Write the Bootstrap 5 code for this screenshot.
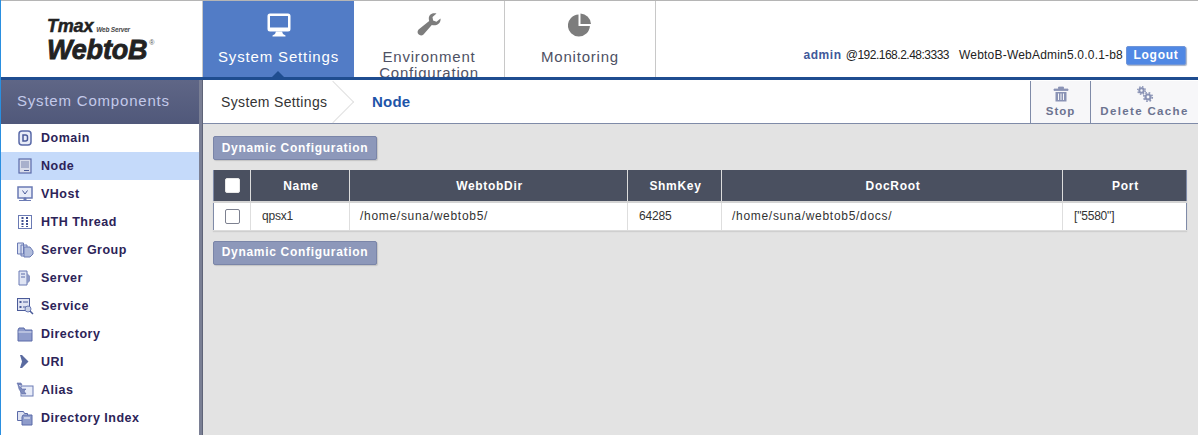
<!DOCTYPE html>
<html lang="en"><head><meta charset="utf-8"><title>WebtoB</title>
<link href="https://cdn.jsdelivr.net/npm/bootstrap@5.3.0/dist/css/bootstrap.min.css" rel="stylesheet">
<style>
html,body{height:435px;overflow:hidden;background:#e3e3e3;font-family:"Liberation Sans",Arial,sans-serif;font-size:12px;color:#222}
.shell{height:435px;width:1198px;border-left:1px solid #2a8fe0}
.topbar{height:80px;border-top:1px solid #b5b5b5;border-bottom:3px solid #1f4d90;background:#fff}
.logo-box{width:201px;height:76px;flex:none;padding:16px 0 0 46px;font-style:italic;font-weight:700;color:#222;line-height:1}
.logo-a{font-size:18px;letter-spacing:-.2px;height:20px;display:flex;align-items:baseline;gap:3px;-webkit-text-stroke:.5px #222}
.logo-a small{font-size:6.500px;font-weight:700;color:#444;-webkit-text-stroke:0}
.logo-b{font-size:27px;letter-spacing:-.2px;display:flex;-webkit-text-stroke:.8px #222}
.logo-b sup{font-size:7px;font-style:normal;font-weight:400;position:static;line-height:12px;margin-left:2px;-webkit-text-stroke:0;color:#555}
.tab-item{width:151px;height:76px;flex:none;border-right:1px solid #c8c8c8;text-align:center;font-size:15px;line-height:16px;color:#4e5164;letter-spacing:.8px;overflow:hidden;padding-top:12px;position:relative}
.tab-item svg{display:block;margin:0 auto 12px}
.tab-on{background:#527cc6;color:#fff;border-right:0;border-left:1px solid #c8c8c8;overflow:visible;letter-spacing:.85px}
.tab-on::after{content:"";position:absolute;left:69px;bottom:0;border:6px solid transparent;border-top:0;border-bottom-color:#1f4d90}
.tab-first{width:152px}
.user-box{flex:1;display:flex;justify-content:flex-end;align-items:center;height:76px;padding:32px 12px 0 0;gap:0;white-space:nowrap;font-size:12px;letter-spacing:.2px;color:#222}
.user-name{color:#40589a;font-weight:700;letter-spacing:.6px;margin-right:4px}
.user-ip{letter-spacing:-.5px;margin-right:10px}
.logout{background:#5088e4;color:#fff;font-weight:700;font-size:12px;letter-spacing:.7px;border:1px solid #6f95d8;border-radius:2px;padding:0;width:60px;height:19px;line-height:16px;margin-left:3px;box-shadow:1px 1px 1px #a9b3c6}
.side{width:198px;flex:none;background:#fff;height:355px;overflow:hidden}
.side-head{height:44px;background:linear-gradient(#5f6686,#50587a);color:#c3c9ea;font-size:15px;letter-spacing:.8px;line-height:42px;padding-left:16px}
.side-row{height:28px;display:flex;align-items:center;font-weight:700;font-size:12.5px;letter-spacing:.5px;color:#2c2358;padding-left:15px}
.side-row svg{width:18px;height:18px;flex:none;margin-right:7px}
.side-on{background:#c5dafa}
.split{width:4px;flex:none;background:#7a7f94;border-right:1px solid #5f6478;margin-right:0}
.main{flex:1;min-width:0;height:355px}
.crumb{height:44px;background:#fff;border-top:1px solid #fff;border-bottom:1px solid #7f8ba8}
.crumb-a{font-size:14px;letter-spacing:.35px;color:#333;padding-left:18px;width:136px;line-height:42px;position:relative}
.crumb-a::after{content:"";position:absolute;right:-9px;top:0;width:30px;height:30px;transform:translateY(6px) rotate(45deg);border-top:1px solid #e0e0e0;border-right:1px solid #e0e0e0}
.crumb-b{font-size:15px;font-weight:700;color:#1d54a8;padding-left:33px;line-height:42px;letter-spacing:.2px}
.tool{border-left:1px solid #7f8ba8;background:#f7f7f9;height:42px;text-align:center;color:#6c7390;font-weight:700;font-size:11.5px;letter-spacing:1px;line-height:12px;padding-top:5px}
.tool svg{display:block;margin:0 auto 3px}
.tool-a{width:60px}.tool-b{width:108px;letter-spacing:1.35px}
.pane{padding:12px 11px 0 10px}
.act{display:block;background:#8d98ba;border:1px solid #7a85a8;border-radius:2px;color:#fff;font-weight:700;font-size:12px;letter-spacing:.7px;width:164px;height:24px;line-height:21px;padding:0;box-shadow:1px 1px 1px #c4c4c4;white-space:nowrap}
table.grid{table-layout:fixed;width:973px;margin:10px 0 10px;border-collapse:collapse;background:#fff;box-shadow:0 1px 1px #cfcfcf}
table.grid th{background:#4a5060;color:#fff;height:32px;font-size:12px;letter-spacing:.7px;text-align:center;border:0;border-right:1px solid #dcdcdc;border-bottom:2px solid #d4d4d4;padding:0 0 0 2px;vertical-align:middle}
table.grid td{height:28px;padding:0 10px;font-size:12px;letter-spacing:.7px;color:#333;border-right:1px solid #dedede;border-bottom:1px solid #dcdcdc;vertical-align:middle;white-space:nowrap}
table.grid td.cell-tight{letter-spacing:-.2px;padding-left:11px}
table.grid th:last-child,table.grid td:last-child{border-right:1px solid #7f8ba8}
table.grid th:first-child,table.grid td:first-child{padding:0;text-align:center;border-left:1px solid #7f8ba8}
.box{display:block;width:15px;height:15px;border:1px solid #7d8190;border-radius:2px;background:#fff;margin:0 auto}
.box-h{border-color:#e8e8e8}
</style></head><body>
<div class="shell d-flex flex-column">
 <div class="topbar d-flex">
  <div class="logo-box"><div class="logo-a">Tmax <small>Web Server</small></div><div class="logo-b">WebtoB<sup>®</sup></div></div>
  <div class="tab-item tab-on tab-first">
   <svg width="24" height="24" viewBox="0 0 24 24"><path d="M3 0.500h18a2.500 2.500 0 0 1 2.500 2.500v13a2.500 2.500 0 0 1-2.500 2.500H3A2.500 2.500 0 0 1 .5 16V3A2.500 2.500 0 0 1 3 .5zM3 3v11.500h18V3z" fill="#fff" fill-rule="evenodd"/><path d="M9 18.500h6l1 2.500 2.500 1.500v1H5.500v-1L8 21z" fill="#fff"/></svg>
   System Settings</div>
  <div class="tab-item">
   <svg width="24" height="24" viewBox="0 0 24 24"><path d="M23.500 5.500l-4 3.200-3.400-1.200-.6-3.500L19.500.6c-3.500-1.200-7.700.8-7.700 4.800 0 1 .2 1.800.4 2.600L1.600 16.400c-1.300 1.300-1.400 3.400-.1 4.900 1.300 1.400 3.600 1.500 5 .1l8.300-9.500c3.900 1.300 9.400-.8 8.700-6.400z" fill="#7d7d7d"/></svg>
   Environment Configuration</div>
  <div class="tab-item">
   <svg width="24" height="24" viewBox="0 0 24 24"><path d="M10.500 1.500v11.500h11.400A11 11 0 1 1 10.500 1.500z" fill="#7d7d7d"/><path d="M12.500 0.500A11 11 0 0 1 23 11h-10.500z" fill="#7d7d7d"/></svg>
   Monitoring</div>
  <div class="user-box"><span class="user-name">admin</span><span class="user-ip">@192.168.2.48:3333</span><span>WebtoB-WebAdmin5.0.0.1-b8</span><button class="logout">Logout</button></div>
 </div>
 <div class="d-flex flex-grow-1">
  <div class="side">
   <div class="side-head">System Components</div>
   <div class="side-row"><svg viewBox="0 0 18 18"><rect x="3" y="2" width="12" height="14" rx="3" fill="#e8ecf8" stroke="#5a6aa8" stroke-width="1.500"/><path d="M7 6h2.500a2 2 0 0 1 2 2v2a2 2 0 0 1-2 2H7z" fill="none" stroke="#4a5a98" stroke-width="1.500"/></svg>Domain</div>
   <div class="side-row side-on"><svg viewBox="0 0 18 18"><rect x="3" y="2" width="12" height="14" fill="#d8dcea" stroke="#5a6aa8" stroke-width="1.200"/><rect x="5" y="4" width="8" height="7" fill="#a8b0cc"/><path d="M8 13.500h5" stroke="#4a5a98"/></svg>Node</div>
   <div class="side-row"><svg viewBox="0 0 18 18"><rect x="2" y="2" width="14" height="11" fill="#e8ecf8" stroke="#6a7ab4" stroke-width="1.500"/><path d="M6.500 5.500L9 9l2.500-3.500" fill="none" stroke="#4a5a98"/><path d="M8 13h2v2H8zM3 15.500h12" stroke="#6a7ab4" fill="#6a7ab4"/></svg>VHost</div>
   <div class="side-row"><svg viewBox="0 0 18 18"><rect x="2.500" y="2.500" width="13" height="13" fill="#fff" stroke="#6a7ab4"/><path d="M6.500 4v10M11 4v10" stroke="#3f4f90" stroke-width="2" stroke-dasharray="2 1"/></svg>HTH Thread</div>
   <div class="side-row"><svg viewBox="0 0 18 18"><path d="M1.500 2h6v11h-6zM5 4h6v11H5z" fill="#d8dff2" stroke="#6a7ab4"/><path d="M8 6h6l3 4v3l-3 3H8z" fill="#b0bcdc" stroke="#6a7ab4"/></svg>Server Group</div>
   <div class="side-row"><svg viewBox="0 0 18 18"><path d="M3 2h7l1 0v14H3z" fill="#e0e5f4" stroke="#6a7ab4"/><path d="M11 4l3 3v5l-3 3z" fill="#8c98c4"/><path d="M5 5h4M5 8h4" stroke="#5a6aa8"/></svg>Server</div>
   <div class="side-row"><svg viewBox="0 0 18 18"><rect x="1.500" y="1.500" width="12" height="12" fill="#dfe3f2" stroke="#4a5a98"/><path d="M3.500 4h2v2h-2zM3.500 9h2v2h-2z" fill="#4a5a98"/><path d="M7 5h5M7 10h3" stroke="#4a5a98"/><circle cx="12" cy="12" r="3" fill="#c8d0e6" stroke="#6a7ab4"/><path d="M14 14l3 3" stroke="#4a5a98" stroke-width="1.500"/></svg>Service</div>
   <div class="side-row"><svg viewBox="0 0 18 18"><path d="M2 5l1-2h5l1 2h7v11H2z" fill="#8f9ccb" stroke="#5a6aa8"/><path d="M2.500 7h13" stroke="#dfe3f2"/></svg>Directory</div>
   <div class="side-row"><svg viewBox="0 0 18 18"><path d="M4 2h2l6.500 6.500L6 15H4l2-6.500z" fill="#5a6aa0"/></svg>URI</div>
   <div class="side-row"><svg viewBox="0 0 18 18"><rect x="5" y="5" width="12" height="10" fill="#e8ecf8" stroke="#6a7ab4"/><path d="M1 2h4l1 2H2zM2 4l4 4 4 0-2 2 2 3H6L3 8z" fill="#7f8cbc" stroke="#5a6aa8" stroke-width=".6"/></svg>Alias</div>
   <div class="side-row"><svg viewBox="0 0 18 18"><path d="M1.500 2.500h6l1 2h3v7h-10z" fill="#dfe3f2" stroke="#5a6aa8"/><path d="M6 8l1-2h9v10H6z" fill="#8f9ccb" stroke="#5a6aa8"/><path d="M8 9h6" stroke="#fff"/></svg>Directory Index</div>
  </div>
  <div class="split"></div>
  <div class="main">
   <div class="crumb d-flex">
    <div class="crumb-a">System Settings</div><div class="crumb-b flex-grow-1">Node</div>
    <div class="tool tool-a"><svg width="16" height="16" viewBox="0 0 16 16"><path d="M1 3h14v1.500H1zM5.500 3V1h5v2" fill="#8a93b5" stroke="#8a93b5" stroke-width=".8"/><path d="M2.500 6h11v9.500h-11z" fill="#8a93b5"/><path d="M5.500 7.500v6.500M8 7.500v6.500M10.500 7.500v6.500" stroke="#f7f7f9"/></svg>Stop</div>
    <div class="tool tool-b"><svg width="18" height="16" viewBox="0 0 18 16"><g fill="none" stroke="#8a93b5"><circle cx="5.500" cy="4.500" r="2.200" stroke-width="2"/><circle cx="5.500" cy="4.500" r="3.800" stroke-width="1.400" stroke-dasharray="1.500 1.500"/><circle cx="12" cy="11" r="2.500" stroke-width="2.200"/><circle cx="12" cy="11" r="4.300" stroke-width="1.600" stroke-dasharray="1.700 1.700"/></g></svg>Delete Cache</div>
   </div>
   <div class="pane">
    <button class="act">Dynamic Configuration</button>
    <table class="grid">
     <colgroup><col style="width:37px"><col style="width:99px"><col style="width:278px"><col style="width:94px"><col style="width:341px"><col style="width:124px"></colgroup>
     <thead><tr><th><span class="box box-h"></span></th><th>Name</th><th>WebtobDir</th><th>ShmKey</th><th>DocRoot</th><th>Port</th></tr></thead>
     <tbody><tr><td><span class="box"></span></td><td class="cell-tight">qpsx1</td><td>/home/suna/webtob5/</td><td class="cell-tight">64285</td><td>/home/suna/webtob5/docs/</td><td class="cell-tight">["5580"]</td></tr></tbody>
    </table>
    <button class="act">Dynamic Configuration</button>
   </div>
  </div>
 </div>
</div>
<script src="https://cdn.jsdelivr.net/npm/bootstrap@5.3.0/dist/js/bootstrap.bundle.min.js"></script>
</body></html>
